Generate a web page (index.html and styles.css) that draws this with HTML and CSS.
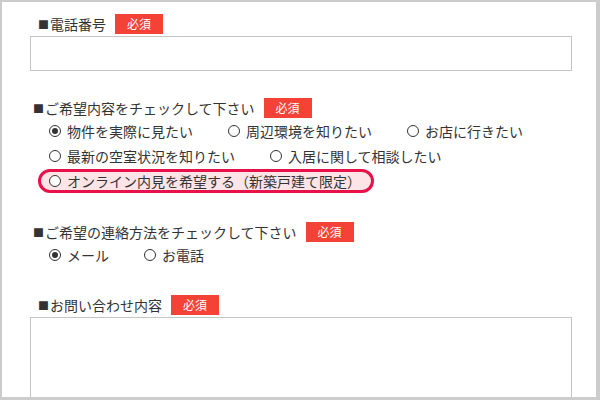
FILE: index.html
```html
<!DOCTYPE html>
<html lang="ja">
<head>
    <meta charset="utf-8">
    <title>お問い合わせ</title>
    <link rel="stylesheet" href="styles.css">
</head>
<body>
    <div class="frame">
        <form class="contact-form">
            <div class="field field-tel">
                <div class="field-title indent"><span class="mark">■</span>電話番号<span class="required">必須</span></div>
                <input type="text" class="text-input">
            </div>

            <div class="field field-wish">
                <div class="field-title"><span class="mark">■</span>ご希望内容をチェックして下さい<span class="required">必須</span></div>
                <div class="choice-row">
                    <label class="choice"><span class="radio checked"></span>物件を実際に見たい</label>
                    <label class="choice"><span class="radio"></span>周辺環境を知りたい</label>
                    <label class="choice"><span class="radio"></span>お店に行きたい</label>
                </div>
                <div class="choice-row">
                    <label class="choice"><span class="radio"></span>最新の空室状況を知りたい</label>
                    <label class="choice"><span class="radio"></span>入居に関して相談したい</label>
                </div>
                <div class="choice-row">
                    <label class="choice highlight"><span class="radio"></span>オンライン内見を希望する（新築戸建て限定）</label>
                </div>
            </div>

            <div class="field">
                <div class="field-title"><span class="mark">■</span>ご希望の連絡方法をチェックして下さい<span class="required">必須</span></div>
                <div class="choice-row">
                    <label class="choice"><span class="radio checked"></span>メール</label>
                    <label class="choice"><span class="radio"></span>お電話</label>
                </div>
            </div>

            <div class="field">
                <div class="field-title indent"><span class="mark">■</span>お問い合わせ内容<span class="required">必須</span></div>
                <textarea class="text-area"></textarea>
            </div>
        </form>
    </div>
</body>
</html>
```

FILE: styles.css
```css
body {
    margin: 0;
    font-family: "Noto Sans CJK JP", sans-serif;
    color: #333;
}
.frame {
    width: 600px;
    height: 400px;
    box-sizing: border-box;
    border: 2px solid #ccc;
    border-right-width: 4px;
    border-bottom-width: 3px;
    overflow: hidden;
    background: #fff;
}
.contact-form {
    padding: 12px 24px 0 28px;
}
.field {
    margin-bottom: 28px;
}
.field-tel {
    margin-bottom: 27px;
}
.field-wish {
    margin-bottom: 29px;
}
.field-title {
    display: flex;
    align-items: center;
    height: 20px;
    padding-left: 3px;
    font-size: 14px;
}
.field-title.indent {
    padding-left: 8px;
}
.mark {
    font-size: 11px;
    margin-right: 1px;
}
.required {
    display: inline-block;
    width: 48px;
    height: 20px;
    line-height: 20px;
    margin-left: 9px;
    background-color: #f44336;
    color: #fff;
    font-size: 12px;
    text-align: center;
}
.text-input, .text-area {
    display: block;
    width: 100%;
    box-sizing: border-box;
    margin-top: 2px;
    border: 1px solid #c4c4c4;
    padding: 5px;
    font-size: 14px;
}
.text-input {
    height: 35px;
}
.text-area {
    height: 120px;
    resize: none;
}
.choice-row {
    display: flex;
    align-items: center;
    height: 25px;
    padding-left: 19px;
}
.choice {
    display: flex;
    align-items: center;
    font-size: 14px;
    margin-right: 35px;
}
.radio {
    position: relative;
    width: 12px;
    height: 12px;
    box-sizing: border-box;
    border: 1px solid #333;
    border-radius: 50%;
    margin-right: 6px;
    background: #fff;
}
.radio.checked::after {
    content: "";
    position: absolute;
    left: 2px;
    top: 2px;
    width: 6px;
    height: 6px;
    border-radius: 50%;
    background: #333;
}
.highlight {
    margin-left: -11px;
    height: 24px;
    box-sizing: border-box;
    padding: 0 10px 0 8px;
    border: 3px solid #e8114a;
    border-radius: 12px;
    background-color: #fde4e6;
}
```
